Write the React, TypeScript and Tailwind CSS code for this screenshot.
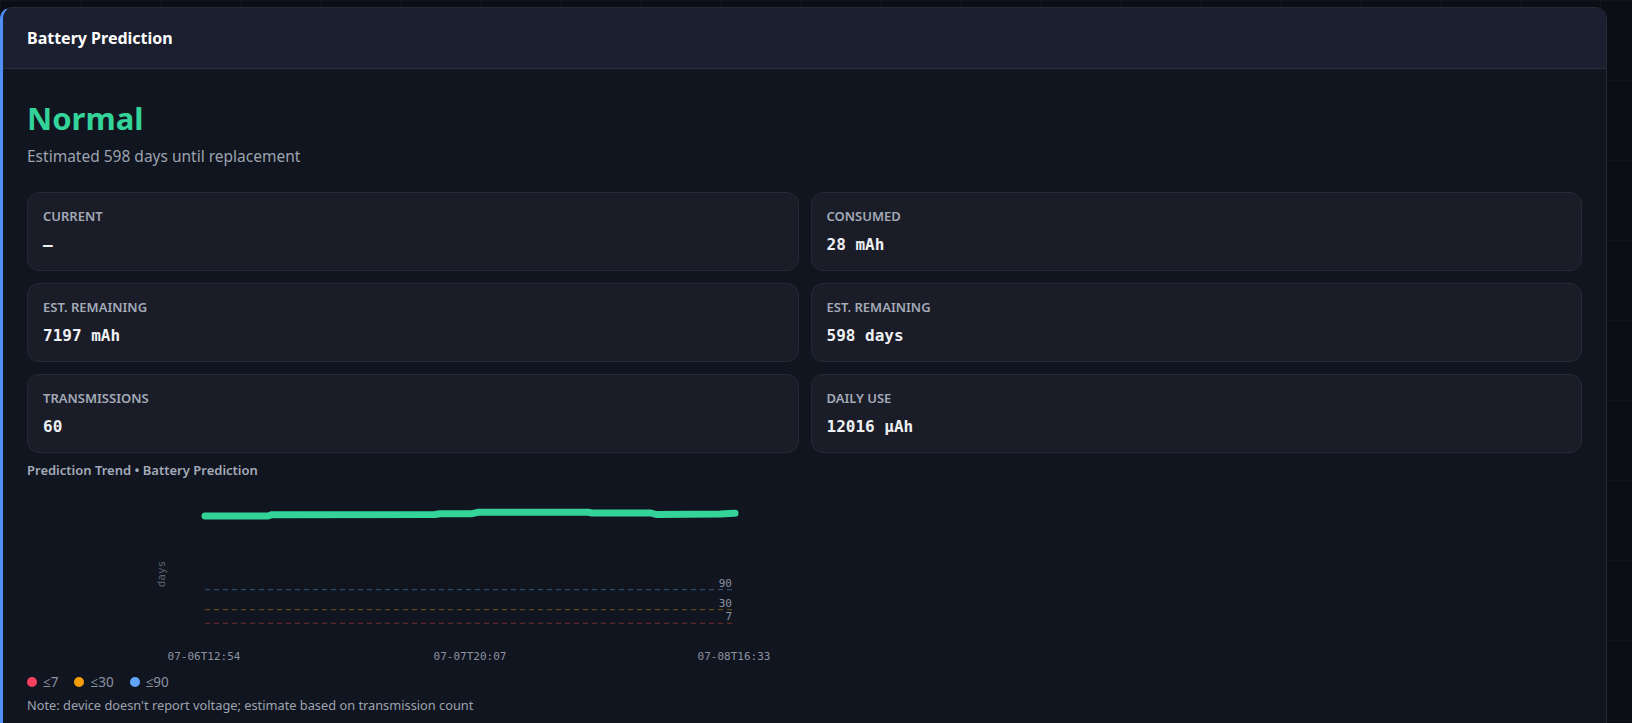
import React from "react";

const stats = [
  { label: "Current", value: "–" },
  { label: "Consumed", value: "28 mAh" },
  { label: "Est. Remaining", value: "7197 mAh" },
  { label: "Est. Remaining", value: "598 days" },
  { label: "Transmissions", value: "60" },
  { label: "Daily Use", value: "12016 µAh" },
];

const trend: [number, number][] = [
  [178, 37],
  [241, 37],
  [245, 35.7],
  [408, 35.5],
  [413, 34.7],
  [445, 34.7],
  [451, 33.3],
  [561, 33.3],
  [565, 34],
  [624, 34],
  [629, 35.5],
  [693, 35],
  [708, 34.3],
];

const thresholds = [
  { v: "90", y: 110.7, color: "#60a5fa" },
  { v: "30", y: 130.7, color: "#f59e0b" },
  { v: "7", y: 144.3, color: "#ef4444" },
];

function TrendChart() {
  const mono = { fontFamily: '"DejaVu Sans Mono", monospace' };
  return (
    <svg width="770" height="185" viewBox="0 0 770 185" className="block">
      {thresholds.map((t) => (
        <g key={t.v}>
          <line
            x1="178"
            x2="708"
            y1={t.y}
            y2={t.y}
            stroke={t.color}
            strokeOpacity="0.45"
            strokeWidth="1"
            strokeDasharray="5 4"
          />
          <text x="705" y={t.y - 3} textAnchor="end" fontSize="11" fill="#8b93a3" style={mono}>
            {t.v}
          </text>
        </g>
      ))}
      <polyline
        points={trend.map((p) => p.join(",")).join(" ")}
        fill="none"
        stroke="#34d399"
        strokeWidth="7"
        strokeLinecap="round"
        strokeLinejoin="round"
      />
      <text
        x="0"
        y="0"
        transform="translate(138 95) rotate(-90)"
        textAnchor="middle"
        fontSize="11"
        fill="#5b6272"
        style={mono}
      >
        days
      </text>
      {[
        ["07-06T12:54", 177],
        ["07-07T20:07", 443],
        ["07-08T16:33", 707],
      ].map(([t, x]) => (
        <text key={t} x={x} y="181" textAnchor="middle" fontSize="11" fill="#8b93a3" style={mono}>
          {t}
        </text>
      ))}
    </svg>
  );
}

export default function App() {
  return (
    <div
      className="min-h-screen bg-[#0b0e14] bg-[linear-gradient(rgba(255,255,255,0.025)_1px,transparent_1px),linear-gradient(90deg,rgba(255,255,255,0.025)_1px,transparent_1px)] bg-[size:80px_80px] pt-[7px] pr-[25px] overflow-hidden"
      style={{ fontFamily: '"Noto Sans", "Open Sans", sans-serif' }}
    >
      <div className="rounded-t-xl border border-[#262a38] border-l-[3px] border-l-[#4f8ff7] bg-[#11151f] overflow-hidden">
        <div className="h-[61px] flex items-center px-6 bg-[#1c1f2f] border-b border-[#2a2e40]">
          <h3 className="text-[16px] font-bold text-white">Battery Prediction</h3>
        </div>
        <div className="px-6 pt-[29px] pb-10">
          <div className="text-[31px] leading-[40px] font-bold text-[#34d399]">Normal</div>
          <p className="mt-2 text-[15.5px] leading-5 text-[#9ca3af]">Estimated 598 days until replacement</p>

          <div className="mt-[26px] grid grid-cols-2 gap-x-3 gap-y-3">
            {stats.map((s, i) => (
              <div key={i} className="rounded-xl border border-[#262a37] bg-[#1a1d27] px-[15px] pt-[14px] pb-[14px]">
                <div className="text-[13px] leading-[18px] font-semibold uppercase text-[#a3aab8]">{s.label}</div>
                <div
                  className="mt-[9px] text-[16px] leading-[22px] font-bold text-[#eef0f4]"
                  style={{ fontFamily: '"DejaVu Sans Mono", monospace' }}
                >
                  {s.value}
                </div>
              </div>
            ))}
          </div>

          <div className="mt-[8px] text-[13px] leading-[18px] font-semibold text-[#a3aab8]">
            Prediction Trend • Battery Prediction
          </div>
          <TrendChart />
          <div className="mt-[9px] flex items-center gap-4 text-[13.5px] leading-[18px] text-[#8b93a3]">
            <span className="flex items-center gap-1.5">
              <span className="w-2.5 h-2.5 rounded-full bg-[#f43f5e]" />≤7
            </span>
            <span className="flex items-center gap-1.5">
              <span className="w-2.5 h-2.5 rounded-full bg-[#f59e0b]" />≤30
            </span>
            <span className="flex items-center gap-1.5">
              <span className="w-2.5 h-2.5 rounded-full bg-[#60a5fa]" />≤90
            </span>
          </div>
          <p className="mt-[5px] text-[12.8px] leading-[18px] text-[#9ca3af]">
            Note: device doesn&apos;t report voltage; estimate based on transmission count
          </p>
        </div>
      </div>
    </div>
  );
}
